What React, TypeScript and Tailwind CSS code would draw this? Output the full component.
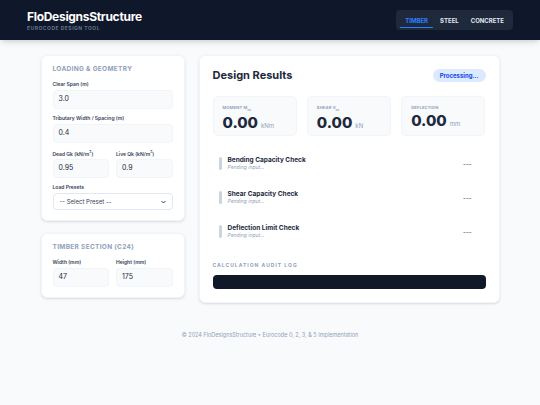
import React from "react";

function Field({ label, value }: { label: React.ReactNode; value: string }) {
  return (
    <div className="flex flex-col">
      <label className="text-[5px] font-semibold text-slate-700 leading-[6px] mb-[3px]">{label}</label>
      <div className="h-[19px] rounded-[4px] bg-slate-50 border border-slate-100 px-[5px] flex items-center text-[7px] text-slate-800">
        {value}
      </div>
    </div>
  );
}

function Metric({ label, sub, unit }: { label: string; sub?: string; unit: string }) {
  return (
    <div className="flex-1 h-[40px] rounded-[5px] bg-slate-50 border border-slate-100 px-[9px] pt-[9px]">
      <div className="text-[4px] font-bold tracking-wider text-slate-400 leading-none">
        {label}
        {sub && <span className="text-[2.5px] align-sub">{sub}</span>}
      </div>
      <div className="mt-[3px] flex items-baseline gap-[3px]">
        <span className="text-[15px] font-extrabold text-slate-800 leading-none">0.00</span>
        <span className="text-[6px] text-slate-400">{unit}</span>
      </div>
    </div>
  );
}

function Check({ title }: { title: string }) {
  return (
    <div className="flex items-center h-[34px] pl-[6px] pr-[14px]">
      <div className="w-[3px] h-[13px] rounded-full bg-slate-300 mr-[6px]" />
      <div className="flex-1">
        <div className="text-[6.5px] font-bold text-slate-800 leading-none">{title}</div>
        <div className="text-[5px] italic text-slate-400 leading-none mt-[2px]">Pending input...</div>
      </div>
      <div className="text-[6px] text-slate-500 font-bold">---</div>
    </div>
  );
}

export default function App() {
  return (
    <div className="min-h-[405px] bg-slate-50 font-['Inter',sans-serif]">
      <header className="h-[40px] bg-[#0f172a] shadow-md flex items-center justify-between px-[27px]">
        <div className="mt-[1px]">
          <div className="text-[12px] font-bold text-white leading-none tracking-tight">FloDesignsStructure</div>
          <div className="text-[5px] font-bold text-slate-500 tracking-widest mt-[3px] leading-none">EUROCODE DESIGN TOOL</div>
        </div>
        <nav className="flex items-center h-[20px] bg-[#1e293b] rounded-[4px] px-[4px] gap-[2px]">
          <div className="relative px-[5px] h-full flex items-center text-[6px] font-bold text-blue-500">
            TIMBER
            <span className="absolute left-0 right-0 bottom-[2px] h-[1px] bg-blue-500 rounded-full" />
          </div>
          <div className="px-[5px] h-full flex items-center text-[6px] font-bold text-slate-200">STEEL</div>
          <div className="px-[5px] h-full flex items-center text-[6px] font-bold text-slate-200">CONCRETE</div>
        </nav>
      </header>

      <main className="w-[459px] mx-auto mt-[15px] flex gap-[14px] items-start">
        <div className="w-[144px] flex flex-col gap-[12px]">
          <section className="bg-white rounded-[6px] border border-slate-100 shadow-sm px-[11px] pt-[10px] pb-[10px]">
            <h2 className="text-[6.5px] font-bold tracking-wider text-slate-400 leading-none mb-[8px]">LOADING &amp; GEOMETRY</h2>
            <div className="flex flex-col gap-[6px]">
              <Field label="Clear Span (m)" value="3.0" />
              <Field label="Tributary Width / Spacing (m)" value="0.4" />
              <div className="grid grid-cols-2 gap-[7px]">
                <Field label={<>Dead Gk (kN/m<span className="text-[3.5px] align-super">2</span>)</>} value="0.95" />
                <Field label={<>Live Qk (kN/m<span className="text-[3.5px] align-super">2</span>)</>} value="0.9" />
              </div>
              <div className="flex flex-col">
                <label className="text-[5px] font-semibold text-slate-700 leading-[6px] mb-[3px]">Load Presets</label>
                <div className="h-[17px] rounded-[4px] bg-white border border-slate-200 px-[6px] flex items-center justify-between text-[6px] text-slate-700">
                  <span>-- Select Preset --</span>
                  <svg width="5" height="4" viewBox="0 0 10 6"><path d="M1 1l4 4 4-4" stroke="#334155" strokeWidth="2" fill="none" /></svg>
                </div>
              </div>
            </div>
          </section>
          <section className="bg-white rounded-[6px] border border-slate-100 shadow-sm px-[11px] pt-[10px] pb-[10px]">
            <h2 className="text-[6.5px] font-bold tracking-wider text-slate-400 leading-none mb-[8px]">TIMBER SECTION (C24)</h2>
            <div className="grid grid-cols-2 gap-[7px]">
              <Field label="Width (mm)" value="47" />
              <Field label="Height (mm)" value="175" />
            </div>
          </section>
        </div>

        <section className="flex-1 h-[248px] bg-white rounded-[6px] border border-slate-100 shadow-sm px-[13px] pt-[11px]">
          <div className="flex items-center justify-between">
            <h1 className="text-[11px] font-bold text-slate-800">Design Results</h1>
            <span className="h-[13px] px-[7px] rounded-full bg-blue-100 text-blue-700 text-[6px] font-bold flex items-center">Processing...</span>
          </div>
          <div className="flex gap-[10px] mt-[12px]">
            <Metric label="MOMENT M" sub="Ed" unit="kNm" />
            <Metric label="SHEAR V" sub="Ed" unit="kN" />
            <Metric label="DEFLECTION" unit="mm" />
          </div>
          <div className="mt-[11px]">
            <Check title="Bending Capacity Check" />
            <Check title="Shear Capacity Check" />
            <Check title="Deflection Limit Check" />
          </div>
          <div className="mt-[14px]">
            <div className="text-[5px] font-bold tracking-[0.2em] text-slate-400 leading-none">CALCULATION AUDIT LOG</div>
            <div className="mt-[7px] h-[14px] rounded-[4px] bg-[#111827]" />
          </div>
        </section>
      </main>

      <footer className="mt-[28px] text-center text-[5.5px] text-slate-400">
        © 2024 FloDesignsStructure • Eurocode 0, 2, 3, &amp; 5 Implementation
      </footer>
    </div>
  );
}
